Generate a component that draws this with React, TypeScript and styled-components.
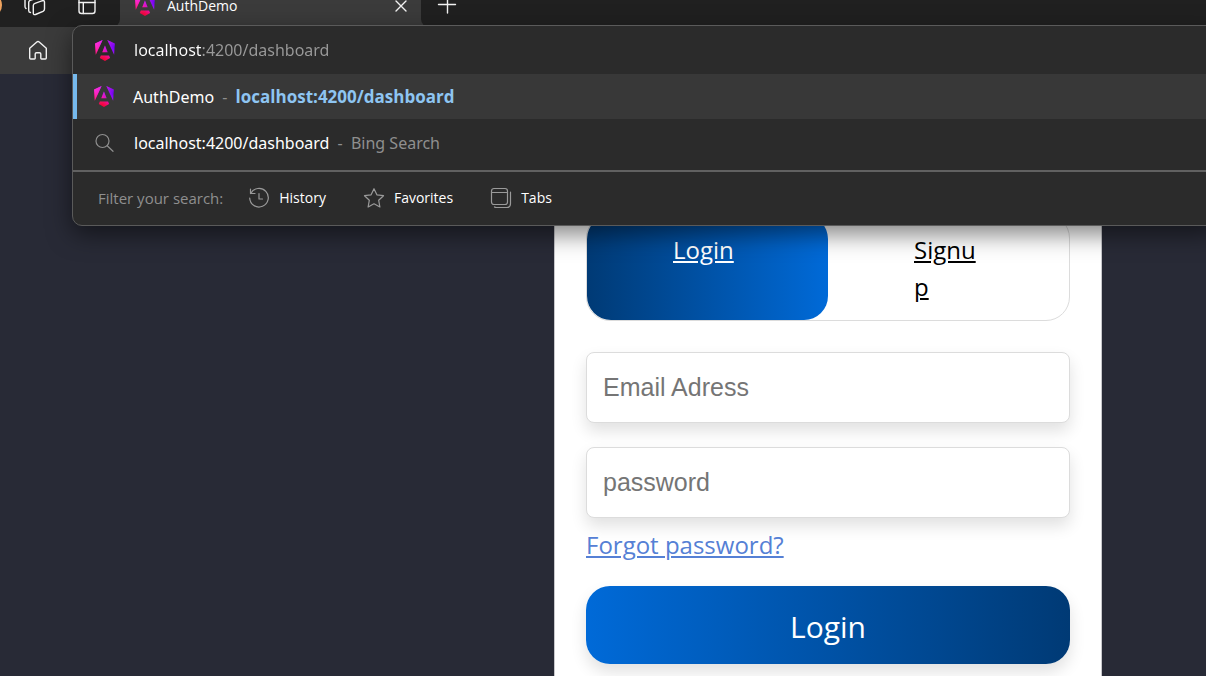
import React from "react";
import styled, { createGlobalStyle } from "styled-components";

const GlobalStyle = createGlobalStyle`
  *, *::before, *::after { box-sizing: border-box; }
  body {
    margin: 0;
    background: #282a36;
    font-family: "Open Sans", "Noto Sans", sans-serif;
  }
  button, input { font: inherit; }
`;

const Window = styled.div`
  position: relative;
  display: flex;
  flex-direction: column;
  height: 100vh;
  overflow: hidden;
`;

const TabStrip = styled.header`
  display: flex;
  align-items: flex-end;
  flex: none;
  height: 27px;
  overflow: hidden;
  background: #3b3b3b;
`;

const StripActions = styled.div`
  display: flex;
  align-items: center;
  gap: 28px;
  width: 120px;
  height: 44px;
  background: #202020;
  border-bottom-right-radius: 8px;
`;

const Avatar = styled.span`
  width: 24px;
  height: 24px;
  margin-left: -22px;
  margin-right: -7px;
  border-radius: 50%;
  background: #f0a35e;
`;

const IconButton = styled.button`
  display: flex;
  align-items: center;
  justify-content: center;
  width: 24px;
  height: 24px;
  padding: 0;
  border: 0;
  background: none;
  color: #f2f2f2;
`;

const ActiveTab = styled.div`
  display: flex;
  align-items: center;
  width: 301px;
  height: 44px;
  padding: 0 8px 0 15px;
  gap: 12px;
  color: #fff;
  font-size: 14px;
`;

const TabTitle = styled.span`
  flex: 1;
`;

const StripRest = styled.div`
  display: flex;
  align-items: center;
  flex: 1;
  height: 44px;
  padding-left: 14px;
  background: #202020;
  border-bottom-left-radius: 8px;
`;

const Toolbar = styled.nav`
  display: flex;
  align-items: center;
  flex: none;
  height: 47px;
  padding: 0 26px 2px;
  background: #3b3b3b;
`;

const Omnibox = styled.section`
  position: absolute;
  top: 25px;
  left: 72px;
  right: -12px;
  border: 1px solid #5a5a5a;
  border-radius: 10px;
  background: #2b2b2b;
  box-shadow: 0 8px 24px rgba(0, 0, 0, 0.5);
`;

const OmniRow = styled.div<{ $active?: boolean; $height: number }>`
  display: flex;
  align-items: center;
  gap: 18px;
  height: ${(p) => p.$height}px;
  padding-left: ${(p) => (p.$active ? 16 : 21)}px;
  border-left: ${(p) => (p.$active ? "4px solid #76b9ed" : "0")};
  background: ${(p) => (p.$active ? "#383838" : "transparent")};
  color: #fff;
  font-family: "Noto Sans", "Open Sans", sans-serif;
  font-size: 16px;
`;

const AddressInput = styled.input`
  flex: 1;
  padding: 0;
  border: 0;
  outline: 0;
  color: transparent;
  background: linear-gradient(90deg, #fff 67px, #9a9a9a 67px);
  background-clip: text;
  -webkit-background-clip: text;
`;

const IconSlot = styled.span`
  display: flex;
  align-items: center;
  justify-content: center;
  width: 22px;
  color: #8f8f8f;
`;

const Muted = styled.span`
  color: #8f8f8f;
`;

const Dash = styled(Muted)`
  margin: 0 4px;
`;

const Match = styled.b`
  color: #8ec5f2;
  font-family: "Open Sans", "Noto Sans", sans-serif;
  font-size: 17px;
`;

const FilterBar = styled.div`
  display: flex;
  align-items: center;
  height: 55px;
  margin-top: 4px;
  padding: 0 25px 2px;
  border-top: 2px solid #616161;
  font-size: 15px;
`;

const FilterButton = styled.button`
  display: flex;
  align-items: center;
  gap: 9px;
  margin-left: 25px;
  margin-right: 12px;
  padding: 0;
  border: 0;
  background: none;
  color: #fff;
  font-size: 14px;

  svg { color: #9a9a9a; }
`;

const Page = styled.main`
  display: grid;
  grid-template-columns: 554fr 548fr 104fr;
  flex: 1;
`;

const Card = styled.form`
  grid-column: 2;
  display: flex;
  flex-direction: column;
  padding: 139px 31px 40px;
  border: 1px solid #c8c8cc;
  background: #fff;
  font-size: 24px;
`;

const TabGroup = styled.div`
  display: flex;
  flex: none;
  height: 107px;
  margin-bottom: 31px;
  border: 1px solid #dcdcdc;
  border-radius: 24px;
`;

const TabLink = styled.a<{ $active?: boolean }>`
  flex: 1 1 0;
  min-width: 0;
  padding: 16px 86px 0;
  border-radius: 24px;
  color: ${(p) => (p.$active ? "#fff" : "#000")};
  background: ${(p) => (p.$active ? "linear-gradient(90deg, #003a75, #006ad8)" : "none")};
  line-height: 37px;
  word-break: break-all;
`;

const Field = styled.input`
  flex: none;
  height: 71px;
  margin-bottom: 24px;
  padding: 0 16px;
  border: 1px solid #dcdcdc;
  border-radius: 8px;
  background: #fff;
  box-shadow: 0 8px 16px rgba(0, 0, 0, 0.12);
  font-family: "Liberation Sans", Arial, sans-serif;
  font-size: 25px;

  &:last-of-type { margin-bottom: 8px; }
  &::placeholder { color: #757575; opacity: 1; }
`;

const ForgotLink = styled.a`
  align-self: flex-start;
  margin-bottom: 22px;
  color: #5580d5;
  line-height: 38px;
`;

const SubmitButton = styled.button`
  flex: none;
  height: 78px;
  padding: 2px 0 0;
  border: 0;
  border-radius: 24px;
  background: linear-gradient(90deg, #006ad8, #003a75);
  box-shadow: 0 8px 16px rgba(0, 0, 0, 0.12);
  color: #fff;
  font-size: 30px;
`;

function AngularLogo({ id }: { id: string }) {
  return (
    <svg width="20" height="21" viewBox="0 0 223 236" aria-hidden="true">
      <defs>
        <linearGradient id={`${id}-a`} x1="50" y1="220" x2="190" y2="60" gradientUnits="userSpaceOnUse">
          <stop offset="0" stopColor="#e40035" />
          <stop offset="0.24" stopColor="#f60a48" />
          <stop offset="0.45" stopColor="#f20a9c" />
          <stop offset="0.75" stopColor="#9a0fff" />
          <stop offset="1" stopColor="#6c00f5" />
        </linearGradient>
        <linearGradient id={`${id}-b`} x1="20" y1="10" x2="150" y2="150" gradientUnits="userSpaceOnUse">
          <stop offset="0" stopColor="#ff31d9" />
          <stop offset="1" stopColor="#ff31d9" stopOpacity="0" />
        </linearGradient>
      </defs>
      {[`url(#${id}-a)`, `url(#${id}-b)`].map((fill) => (
        <path
          key={fill}
          fill={fill}
          d="m222.077 39.192-8.019 125.923L137.387 0l84.69 39.192Zm-53.105 162.825-57.933 33.056-57.934-33.056 11.783-28.556h92.301l11.783 28.556ZM111.039 62.675l30.357 73.803H80.681l30.358-73.803ZM7.937 165.115 0 39.192 84.69 0 7.937 165.115Z"
        />
      ))}
    </svg>
  );
}

const Svg = ({ size, stroke = 1.2, children }: { size: number; stroke?: number; children: React.ReactNode }) => (
  <svg
    width={size}
    height={size}
    viewBox={`0 0 ${size} ${size}`}
    fill="none"
    stroke="currentColor"
    strokeWidth={stroke}
    strokeLinecap="round"
    strokeLinejoin="round"
    aria-hidden="true"
  >
    {children}
  </svg>
);

export default function App() {
  return (
    <>
      <GlobalStyle />
      <Window>
        <TabStrip>
          <StripActions>
            <Avatar />
            <IconButton aria-label="Workspaces">
              <Svg size={24} stroke={1.4}>
                <path d="M12 10.300 19.500 7.700Q21.500 7.200 21.500 9.200V16Q21.500 17.500 20 18.300L12.500 21.500Q10.300 22.200 10.300 20V12.500Q10.300 10.900 12 10.300Z" />
                <path d="M7.500 19.500Q5.700 19.300 5.700 17.500V9.500Q5.700 8 7.200 7.400L17 4" />
                <path d="M3 15.500Q2 15 2 13.500V7.500Q2 6 3.500 5.400L10 3" />
              </Svg>
            </IconButton>
            <IconButton aria-label="Tab actions">
              <Svg size={24} stroke={1.4}>
                <rect x="4" y="4" width="16" height="16.500" rx="2.500" />
                <path d="M4 9.500H20M8.300 9.500V20.500" />
              </Svg>
            </IconButton>
          </StripActions>
          <ActiveTab>
            <AngularLogo id="tab" />
            <TabTitle>AuthDemo</TabTitle>
            <IconButton aria-label="Close tab">
              <Svg size={24} stroke={1.4}>
                <path d="M7 8 17 18M17 8 7 18" />
              </Svg>
            </IconButton>
          </ActiveTab>
          <StripRest>
            <IconButton aria-label="New tab">
              <Svg size={24} stroke={1.4}>
                <path d="M3.500 11.500H20.500M12.500 3V20" />
              </Svg>
            </IconButton>
          </StripRest>
        </TabStrip>

        <Toolbar>
          <IconButton aria-label="Home">
            <Svg size={24} stroke={1.4}>
              <path d="M3.700 10.300 10.800 4Q12 3 13.200 4L20.300 10.300V20Q20.300 21 19.300 21H15.500Q14.800 21 14.800 20.300V16Q14.800 14.700 13.500 14.700H10.500Q9.200 14.700 9.200 16V20.300Q9.200 21 8.500 21H4.700Q3.700 21 3.700 20Z" />
            </Svg>
          </IconButton>
        </Toolbar>

        <Page>
          <Card onSubmit={(e) => e.preventDefault()}>
            <TabGroup>
              <TabLink href="#login" $active>Login</TabLink>
              <TabLink href="#signup">Signup</TabLink>
            </TabGroup>
            <Field type="email" aria-label="Email Adress" placeholder="Email Adress" />
            <Field type="password" aria-label="password" placeholder="password" />
            <ForgotLink href="#forgot">Forgot password?</ForgotLink>
            <SubmitButton type="submit">Login</SubmitButton>
          </Card>
        </Page>

        <Omnibox>
          <OmniRow $height={48}>
            <IconSlot><AngularLogo id="address" /></IconSlot>
            <AddressInput aria-label="Address" defaultValue="localhost:4200/dashboard" />
          </OmniRow>
          <OmniRow $height={45} $active>
            <IconSlot><AngularLogo id="match" /></IconSlot>
            <span>AuthDemo <Dash>-</Dash> <Match>localhost:4200/dashboard</Match></span>
          </OmniRow>
          <OmniRow $height={47}>
            <IconSlot>
              <Svg size={22}>
                <circle cx="8.500" cy="9" r="6.500" />
                <path d="M13.200 13.700 19 19.300" />
              </Svg>
            </IconSlot>
            <span>localhost:4200/dashboard <Dash>-</Dash> <Muted>Bing Search</Muted></span>
          </OmniRow>
          <FilterBar>
            <Muted>Filter your search:</Muted>
            <FilterButton>
              <Svg size={22}>
                <path d="M2.500 2V6.500H7M2.700 6.500A9.300 9.300 0 1 1 1.700 11M11 6.500V12H14.500" />
              </Svg>
              History
            </FilterButton>
            <FilterButton>
              <Svg size={22}>
                <path d="M11 1.700 13.900 7.800 20.500 8.700 15.700 13.300 16.900 20 11 16.800 5.100 20 6.300 13.300 1.500 8.700 8.100 7.800Z" />
              </Svg>
              Favorites
            </FilterButton>
            <FilterButton>
              <Svg size={22}>
                <rect x="1.500" y="1.500" width="16" height="16" rx="2.500" />
                <path d="M1.500 5.500H17.500M20.500 5V16.500Q20.500 20.500 16.500 20.500H6.500Q5 20.500 4.500 20" />
              </Svg>
              Tabs
            </FilterButton>
          </FilterBar>
        </Omnibox>
      </Window>
    </>
  );
}
